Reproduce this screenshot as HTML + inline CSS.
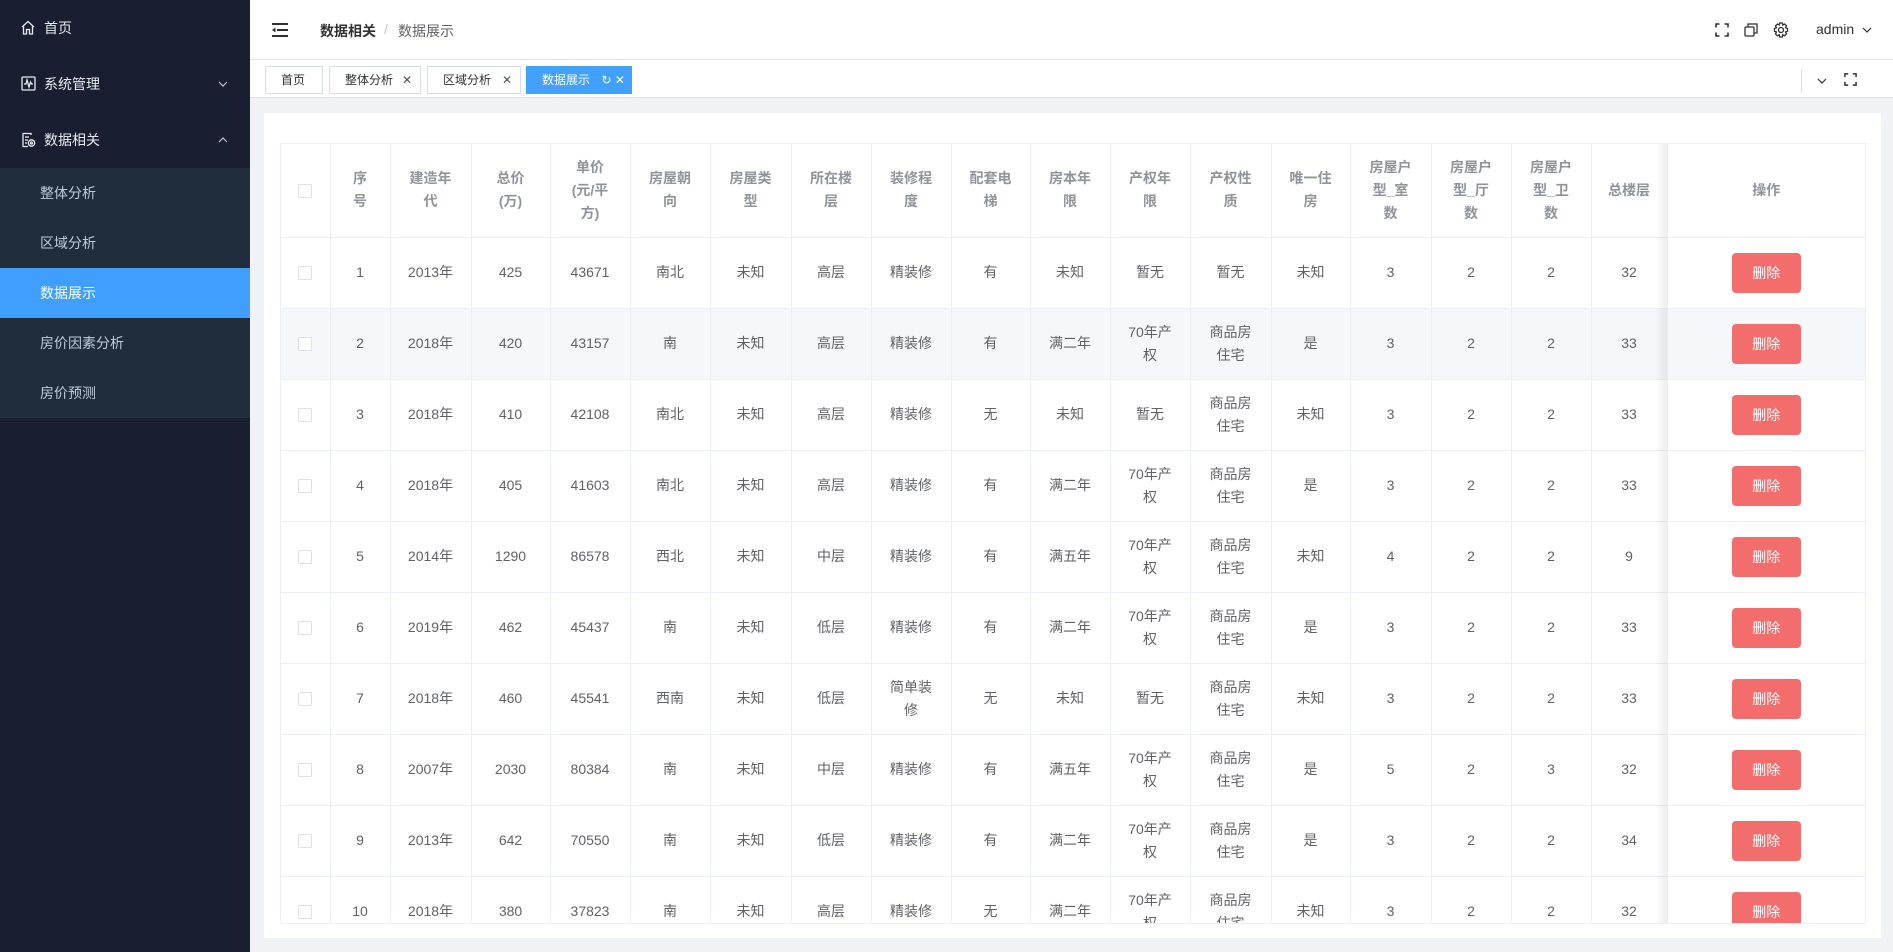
<!DOCTYPE html>
<html><head><meta charset="utf-8"><style>
*{box-sizing:border-box;margin:0;padding:0}
body{width:1893px;height:952px;overflow:hidden;font-family:"Liberation Sans","Noto Sans CJK SC",sans-serif;background:#f0f2f5;position:relative;font-size:14px}
.side{position:absolute;left:0;top:0;width:250px;height:952px;background:#191e30}
.mi{position:absolute;left:0;width:250px;height:56px;color:#e8ecf2;font-size:14px;line-height:56px}
.mi .t{position:absolute;left:44px}
.mi svg{position:absolute;left:21px;top:20px}
.chev{position:absolute;left:218px;top:24px}
.sub{position:absolute;left:0;top:168px;width:250px;height:250px;background:#1f2d3d}
.si{position:absolute;left:0;width:250px;height:50px;line-height:50px;padding-left:40px;color:#bfcbd9}
.si.act{background:#409eff;color:#fff}
.hdr{position:absolute;left:250px;top:0;width:1643px;height:60px;background:#fff;border-bottom:1px solid #e0e3e8}
.tags{position:absolute;left:250px;top:60px;width:1643px;height:38px;background:#fff;border-bottom:1px solid #dfe2e6}
.tag{position:absolute;top:6px;height:28px;line-height:26px;border:1px solid #d8dce5;background:#fff;color:#303133;font-size:12px;padding-left:15px}
.tag .x{position:absolute;right:8px;top:0;font-size:12px;color:#555}
.card{position:absolute;left:264px;top:113px;width:1617px;height:825px;background:#fff}
.wrap{position:absolute;left:280px;top:143px;width:1586px;height:781px;overflow:hidden;border:1px solid #ebeef5}
table{border-collapse:collapse;table-layout:fixed;width:1584px}
td,th{border-right:1px solid #ebeef5;border-bottom:1px solid #ebeef5;text-align:center;color:#606266;font-size:14px;line-height:23px;font-weight:normal;white-space:nowrap;vertical-align:middle;padding:0}
td:last-child,th:last-child{border-right:none}
th{color:#909399;font-weight:bold;height:93px}
td{height:71px}
tr.s td{background:#f5f7fa}
.cb{display:inline-block;width:14px;height:14px;border:1px solid #dcdfe6;border-radius:2px;background:#fff;vertical-align:middle}
.btn{display:inline-block;width:69px;height:40px;line-height:40px;background:#f36d6d;color:#fff;border-radius:4px;font-size:14px}
.shadow{position:absolute;left:1374px;top:0;width:12px;height:781px;background:linear-gradient(to right,rgba(0,0,0,0),rgba(0,0,0,0.07))}
</style></head><body>
<div class="side">
 <div class="mi" style="top:0"><svg width="14" height="15" viewBox="0 0 14 15" fill="none" stroke="#e8ecf2" stroke-width="1.3"><path d="M1 7L7 1.5 13 7M2.5 5.8V14H5.5V9.5H8.5V14H11.5V5.8"/></svg><span class="t">首页</span></div>
 <div class="mi" style="top:56px"><svg width="15" height="15" viewBox="0 0 15 15" fill="none" stroke="#e8ecf2" stroke-width="1.3"><rect x="1" y="1" width="13" height="13" rx="1"/><path d="M3 8H5L6 4 8 11 9.5 6 10.5 8H12"/></svg><span class="t">系统管理</span><svg class="chev" style="left:218px;top:25px" width="10" height="6" viewBox="0 0 10 6" fill="none" stroke="#bfcbd9" stroke-width="1.2"><path d="M1 1L5 5 9 1"/></svg></div>
 <div class="mi" style="top:112px"><svg width="15" height="16" viewBox="0 0 15 16" fill="none" stroke="#e8ecf2" stroke-width="1.3"><path d="M10 3V1.5H2V14.5H7"/><path d="M4 5H8M4 8H7M4 11H6"/><circle cx="10.5" cy="11" r="3.2"/><circle cx="10.5" cy="11" r="1"/></svg><span class="t">数据相关</span><svg class="chev" style="left:218px;top:25px" width="10" height="6" viewBox="0 0 10 6" fill="none" stroke="#bfcbd9" stroke-width="1.2"><path d="M1 5L5 1 9 5"/></svg></div>
 <div class="sub">
  <div class="si" style="top:0">整体分析</div>
  <div class="si" style="top:50px">区域分析</div>
  <div class="si act" style="top:100px">数据展示</div>
  <div class="si" style="top:150px">房价因素分析</div>
  <div class="si" style="top:200px">房价预测</div>
 </div>
</div>
<div class="hdr">
 <svg style="position:absolute;left:22px;top:23px" width="16" height="14" viewBox="0 0 16 14" fill="#303133"><rect x="0" y="0" width="16" height="2"/><rect x="5" y="6" width="11" height="2"/><rect x="0" y="12" width="16" height="2"/><path d="M0 7L3.5 4.5V9.5Z"/></svg>
 <span style="position:absolute;left:70px;top:21px;font-weight:bold;color:#303133">数据相关</span>
 <span style="position:absolute;left:134px;top:21px;color:#c0c4cc">/</span>
 <span style="position:absolute;left:148px;top:21px;color:#606266">数据展示</span>
 <svg style="position:absolute;left:1465px;top:23px" width="14" height="14" viewBox="0 0 14 14" fill="none" stroke="#303133" stroke-width="1.6"><path d="M1 4.5V1H4.5M9.5 1H13V4.5M13 9.5V13H9.5M4.5 13H1V9.5"/></svg>
 <svg style="position:absolute;left:1494px;top:23px" width="14" height="14" viewBox="0 0 14 14" fill="none" stroke="#303133" stroke-width="1.3"><rect x="1" y="4" width="9" height="9" rx="1"/><path d="M4 4V1H13V10H10"/></svg>
 <svg style="position:absolute;left:1523px;top:22px" width="16" height="16" viewBox="0 0 16 16" fill="none" stroke="#303133" stroke-width="1.3"><circle cx="8" cy="8" r="2.5"/><path d="M6.7 1H9.3L9.8 3 11.6 2 13.5 3.9 12.5 5.7 14.5 6.5V9.3L12.5 10 13.5 11.9 11.6 13.8 9.8 12.8 9.3 15H6.7L6.2 12.8 4.4 13.8 2.5 11.9 3.5 10 1.5 9.3V6.5L3.5 5.7 2.5 3.9 4.4 2 6.2 3Z"/></svg>
 <span style="position:absolute;left:1566px;top:21px;color:#303133">admin</span>
 <svg style="position:absolute;left:1612px;top:27px" width="10" height="6" viewBox="0 0 10 6" fill="none" stroke="#303133" stroke-width="1.2"><path d="M1 1L5 5 9 1"/></svg>
</div>
<div class="tags">
 <div class="tag" style="left:15px;width:58px">首页</div>
 <div class="tag" style="left:79px;width:92px">整体分析<span class="x">✕</span></div>
 <div class="tag" style="left:177px;width:94px">区域分析<span class="x">✕</span></div>
 <div class="tag" style="left:276px;width:106px;background:#42a1ff;border-color:#42a1ff;color:#fff">数据展示<span class="x" style="color:#fff;right:6px">↻ ✕</span></div>
 <div style="position:absolute;left:1551px;top:9px;width:1px;height:24px;background:#dcdfe6"></div>
 <svg style="position:absolute;left:1567px;top:18px" width="10" height="6" viewBox="0 0 10 6" fill="none" stroke="#303133" stroke-width="1.2"><path d="M1 1L5 5 9 1"/></svg>
 <svg style="position:absolute;left:1594px;top:13px" width="13" height="13" viewBox="0 0 14 14" fill="none" stroke="#303133" stroke-width="1.6"><path d="M1 4.5V1H4.5M9.5 1H13V4.5M13 9.5V13H9.5M4.5 13H1V9.5"/></svg>
</div>
<div class="card"></div>
<div class="wrap">
<table>
<colgroup><col style="width:49px"><col style="width:60px"><col style="width:81px"><col style="width:79px"><col style="width:80px"><col style="width:80px"><col style="width:81px"><col style="width:80px"><col style="width:80px"><col style="width:79px"><col style="width:80px"><col style="width:80px"><col style="width:81px"><col style="width:79px"><col style="width:81px"><col style="width:80px"><col style="width:80px"><col style="width:76px"><col style="width:198px"></colgroup>
<tr><th><span class="cb"></span></th><th>序<br>号</th><th>建造年<br>代</th><th>总价<br>(万)</th><th>单价<br>(元/平<br>方)</th><th>房屋朝<br>向</th><th>房屋类<br>型</th><th>所在楼<br>层</th><th>装修程<br>度</th><th>配套电<br>梯</th><th>房本年<br>限</th><th>产权年<br>限</th><th>产权性<br>质</th><th>唯一住<br>房</th><th>房屋户<br>型_室<br>数</th><th>房屋户<br>型_厅<br>数</th><th>房屋户<br>型_卫<br>数</th><th>总楼层</th><th>操作</th></tr>
<tr><td><span class="cb"></span></td><td>1</td><td>2013年</td><td>425</td><td>43671</td><td>南北</td><td>未知</td><td>高层</td><td>精装修</td><td>有</td><td>未知</td><td>暂无</td><td>暂无</td><td>未知</td><td>3</td><td>2</td><td>2</td><td>32</td><td><span class="btn">删除</span></td></tr>
<tr class="s"><td><span class="cb"></span></td><td>2</td><td>2018年</td><td>420</td><td>43157</td><td>南</td><td>未知</td><td>高层</td><td>精装修</td><td>有</td><td>满二年</td><td>70年产<br>权</td><td>商品房<br>住宅</td><td>是</td><td>3</td><td>2</td><td>2</td><td>33</td><td><span class="btn">删除</span></td></tr>
<tr><td><span class="cb"></span></td><td>3</td><td>2018年</td><td>410</td><td>42108</td><td>南北</td><td>未知</td><td>高层</td><td>精装修</td><td>无</td><td>未知</td><td>暂无</td><td>商品房<br>住宅</td><td>未知</td><td>3</td><td>2</td><td>2</td><td>33</td><td><span class="btn">删除</span></td></tr>
<tr><td><span class="cb"></span></td><td>4</td><td>2018年</td><td>405</td><td>41603</td><td>南北</td><td>未知</td><td>高层</td><td>精装修</td><td>有</td><td>满二年</td><td>70年产<br>权</td><td>商品房<br>住宅</td><td>是</td><td>3</td><td>2</td><td>2</td><td>33</td><td><span class="btn">删除</span></td></tr>
<tr><td><span class="cb"></span></td><td>5</td><td>2014年</td><td>1290</td><td>86578</td><td>西北</td><td>未知</td><td>中层</td><td>精装修</td><td>有</td><td>满五年</td><td>70年产<br>权</td><td>商品房<br>住宅</td><td>未知</td><td>4</td><td>2</td><td>2</td><td>9</td><td><span class="btn">删除</span></td></tr>
<tr><td><span class="cb"></span></td><td>6</td><td>2019年</td><td>462</td><td>45437</td><td>南</td><td>未知</td><td>低层</td><td>精装修</td><td>有</td><td>满二年</td><td>70年产<br>权</td><td>商品房<br>住宅</td><td>是</td><td>3</td><td>2</td><td>2</td><td>33</td><td><span class="btn">删除</span></td></tr>
<tr><td><span class="cb"></span></td><td>7</td><td>2018年</td><td>460</td><td>45541</td><td>西南</td><td>未知</td><td>低层</td><td>简单装<br>修</td><td>无</td><td>未知</td><td>暂无</td><td>商品房<br>住宅</td><td>未知</td><td>3</td><td>2</td><td>2</td><td>33</td><td><span class="btn">删除</span></td></tr>
<tr><td><span class="cb"></span></td><td>8</td><td>2007年</td><td>2030</td><td>80384</td><td>南</td><td>未知</td><td>中层</td><td>精装修</td><td>有</td><td>满五年</td><td>70年产<br>权</td><td>商品房<br>住宅</td><td>是</td><td>5</td><td>2</td><td>3</td><td>32</td><td><span class="btn">删除</span></td></tr>
<tr><td><span class="cb"></span></td><td>9</td><td>2013年</td><td>642</td><td>70550</td><td>南</td><td>未知</td><td>低层</td><td>精装修</td><td>有</td><td>满二年</td><td>70年产<br>权</td><td>商品房<br>住宅</td><td>是</td><td>3</td><td>2</td><td>2</td><td>34</td><td><span class="btn">删除</span></td></tr>
<tr><td><span class="cb"></span></td><td>10</td><td>2018年</td><td>380</td><td>37823</td><td>南</td><td>未知</td><td>高层</td><td>精装修</td><td>无</td><td>满二年</td><td>70年产<br>权</td><td>商品房<br>住宅</td><td>未知</td><td>3</td><td>2</td><td>2</td><td>32</td><td><span class="btn">删除</span></td></tr>
</table>
<div class="shadow"></div>
</div>
</body></html>
